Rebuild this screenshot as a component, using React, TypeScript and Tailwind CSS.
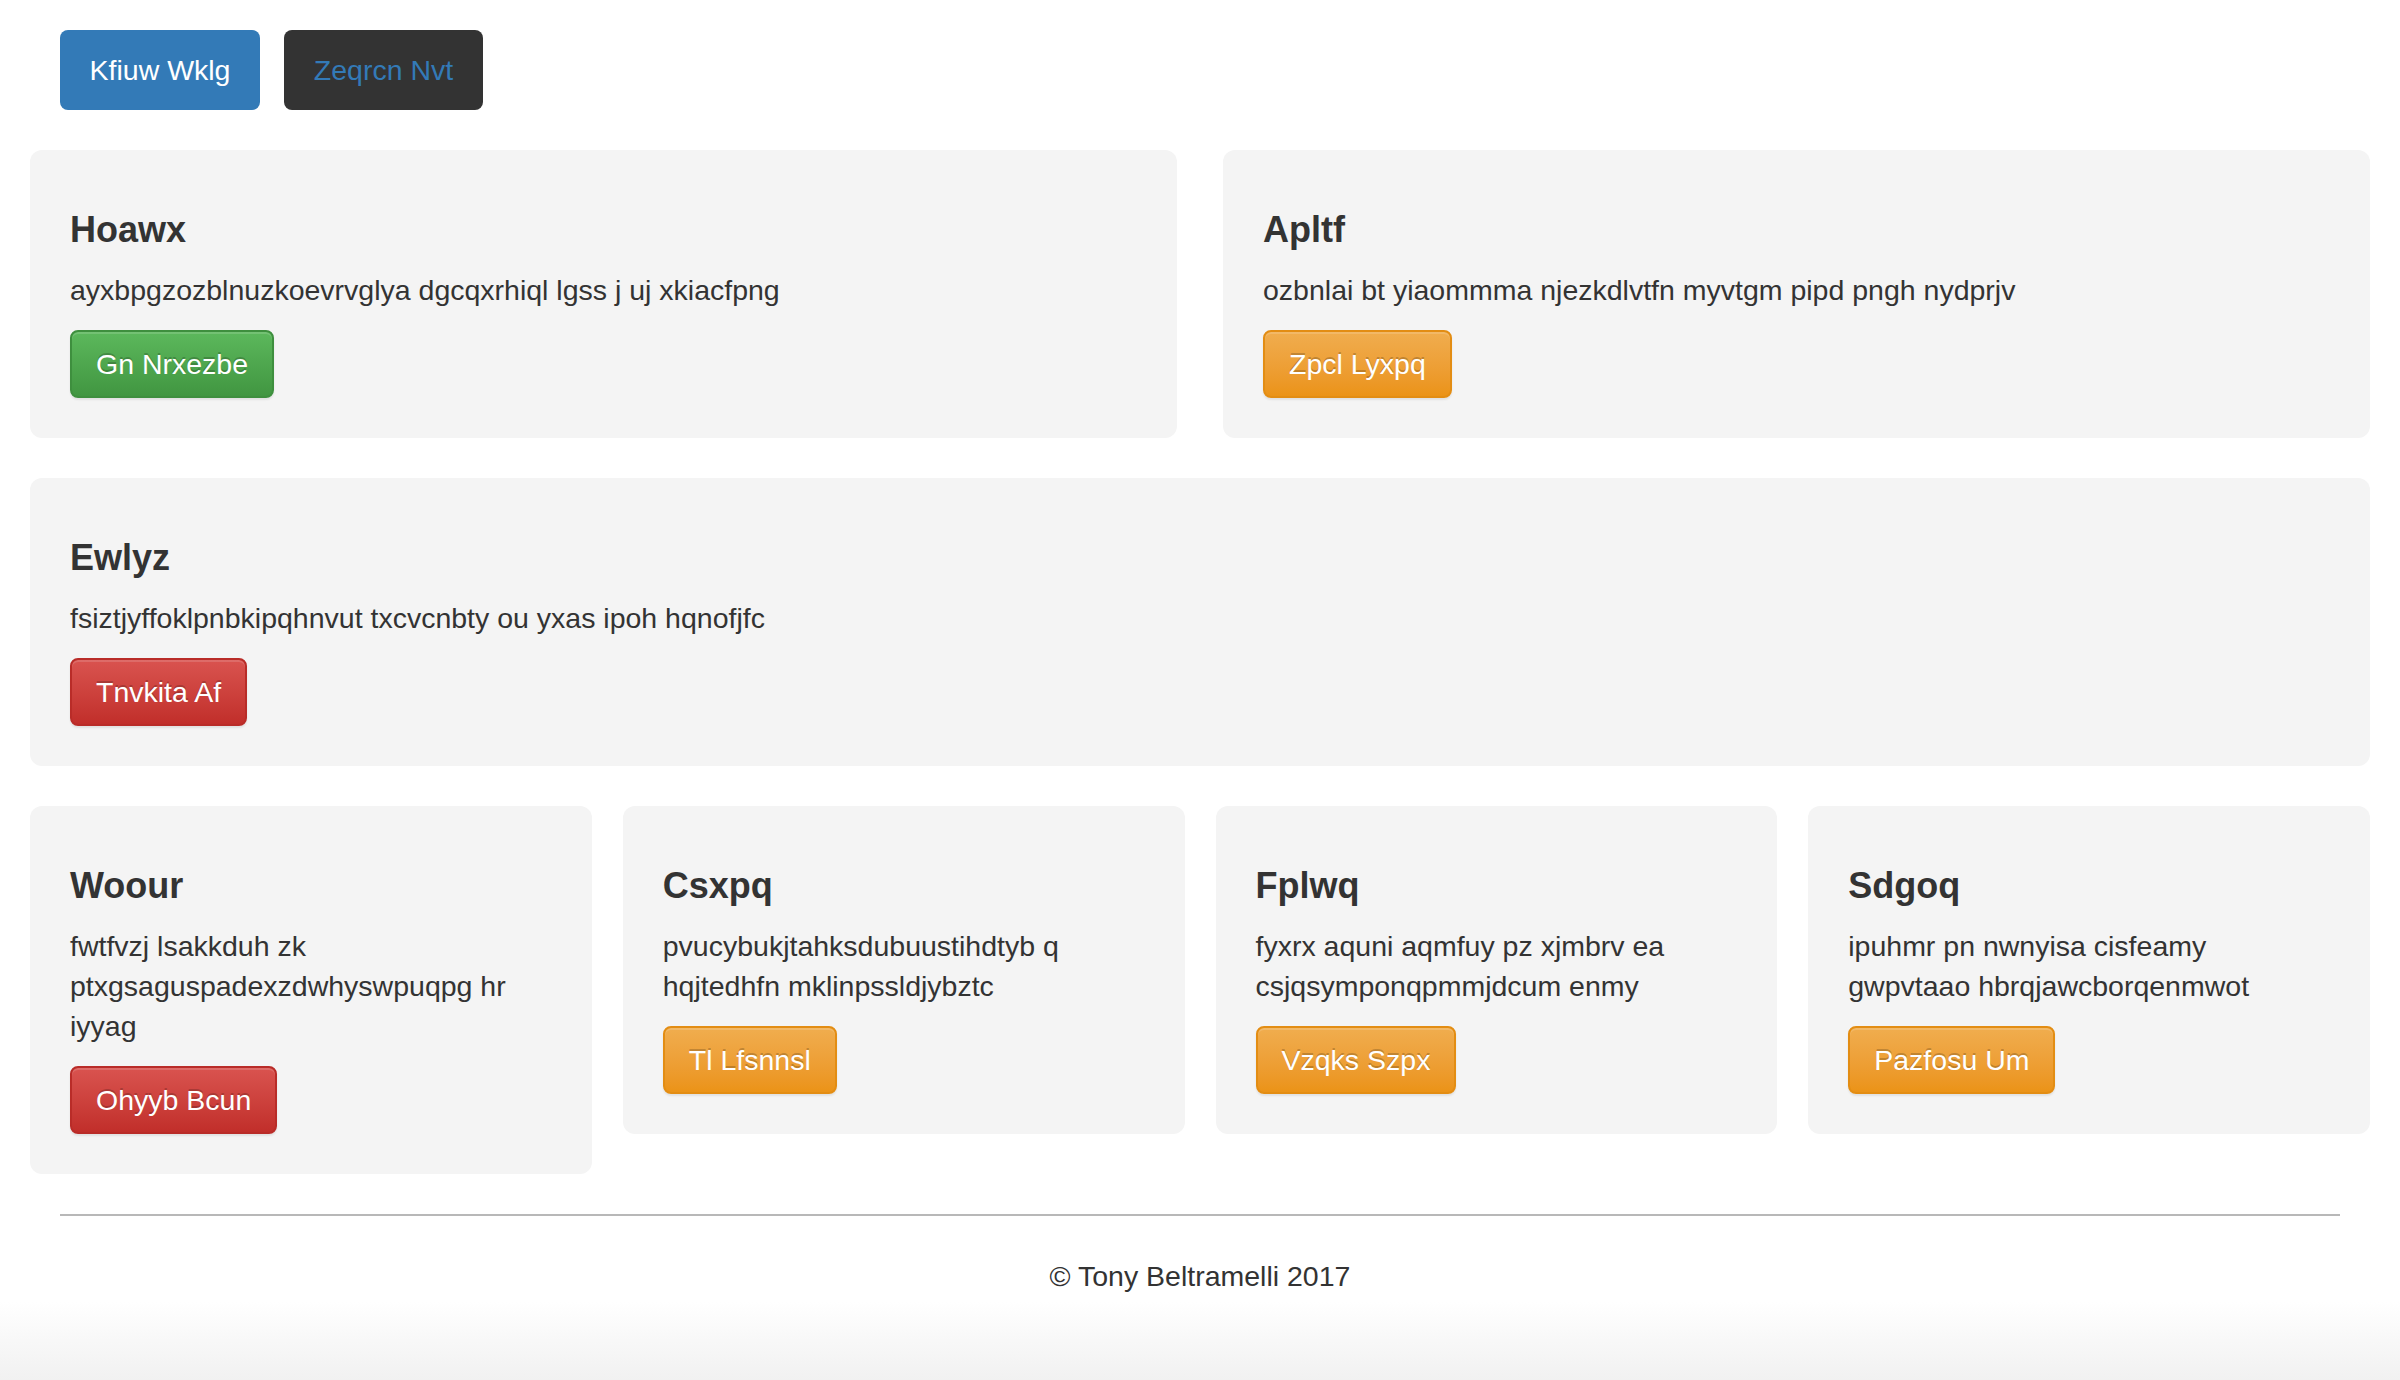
import React from 'react';

type Variant = 'success' | 'warning' | 'danger';

interface CardData {
    title: string;
    text: string;
    button: string;
    variant: Variant;
}

const variantClasses: Record<Variant, string> = {
    success: 'bg-linear-to-b from-[#5cb85c] to-[#419641] border-[#3e8f3e]',
    warning: 'bg-linear-to-b from-[#f0ad4e] to-[#eb9316] border-[#e38d13]',
    danger: 'bg-linear-to-b from-[#d9534f] to-[#c12e2a] border-[#b92c28]',
};

const topRow: CardData[] = [
    { title: 'Hoawx', text: 'ayxbpgzozblnuzkoevrvglya dgcqxrhiql lgss j uj xkiacfpng', button: 'Gn Nrxezbe', variant: 'success' },
    { title: 'Apltf', text: 'ozbnlai bt yiaommma njezkdlvtfn myvtgm pipd pngh nydprjv', button: 'Zpcl Lyxpq', variant: 'warning' },
];

const wide: CardData = {
    title: 'Ewlyz',
    text: 'fsiztjyffoklpnbkipqhnvut txcvcnbty ou yxas ipoh hqnofjfc',
    button: 'Tnvkita Af',
    variant: 'danger',
};

const bottomRow: CardData[] = [
    { title: 'Woour', text: 'fwtfvzj lsakkduh zk ptxgsaguspadexzdwhyswpuqpg hr iyyag', button: 'Ohyyb Bcun', variant: 'danger' },
    { title: 'Csxpq', text: 'pvucybukjtahksdubuustihdtyb q hqjtedhfn mklinpssldjybztc', button: 'Tl Lfsnnsl', variant: 'warning' },
    { title: 'Fplwq', text: 'fyxrx aquni aqmfuy pz xjmbrv ea csjqsymponqpmmjdcum enmy', button: 'Vzqks Szpx', variant: 'warning' },
    { title: 'Sdgoq', text: 'ipuhmr pn nwnyisa cisfeamy gwpvtaao hbrqjawcborqenmwot', button: 'Pazfosu Um', variant: 'warning' },
];

const Card: React.FC<{ data: CardData }> = ({ data }) => (
    <div className="rounded-[12px] bg-[#f4f4f4] p-[40px]">
        <h4 className="mt-[20px] mb-[20px] text-[36px] leading-[40px] font-bold text-[#333]">{data.title}</h4>
        <p className="mb-[20px]">{data.text}</p>
        <button
            className={`rounded-[8px] border-2 px-[24px] py-[12px] text-[28.5px] leading-[40px] text-white [text-shadow:0_-2px_0_rgba(0,0,0,0.2)] shadow-[inset_0_2px_0_rgba(255,255,255,0.15),0_2px_2px_rgba(0,0,0,0.075)] ${variantClasses[data.variant]}`}
        >
            {data.button}
        </button>
    </div>
);

export default function App() {
    return (
        <div className="flex min-h-[1380px] flex-col bg-white font-['Liberation_Sans',Arial,sans-serif] text-[28.5px] leading-[40px] text-[#333]">
            <div className="px-[30px]">
                <div className="flex gap-[24px] pl-[30px] pt-[30px]">
                    <button className="h-[80px] w-[200px] rounded-[8px] bg-[#337ab7] text-[28.5px] text-white">Kfiuw Wklg</button>
                    <button className="h-[80px] w-[199px] rounded-[8px] bg-[#333333] text-[28.5px] text-[#337ab7]">Zeqrcn Nvt</button>
                </div>

                <div className="mt-[40px] grid grid-cols-2 gap-[46px]">
                    {topRow.map((c) => (
                        <Card key={c.title} data={c} />
                    ))}
                </div>

                <div className="mt-[40px]">
                    <Card data={wide} />
                </div>

                <div className="mt-[40px] grid grid-cols-4 items-start gap-[31px]">
                    {bottomRow.map((c) => (
                        <Card key={c.title} data={c} />
                    ))}
                </div>

                <hr className="mx-[30px] mt-[40px] border-t-2 border-[#b8b8b8]" />

                <footer className="mt-[40px] text-center">© Tony Beltramelli 2017</footer>
            </div>
            <div className="mt-[6px] flex-1 bg-linear-to-b from-white to-[#f1f1f1]" />
        </div>
    );
}
